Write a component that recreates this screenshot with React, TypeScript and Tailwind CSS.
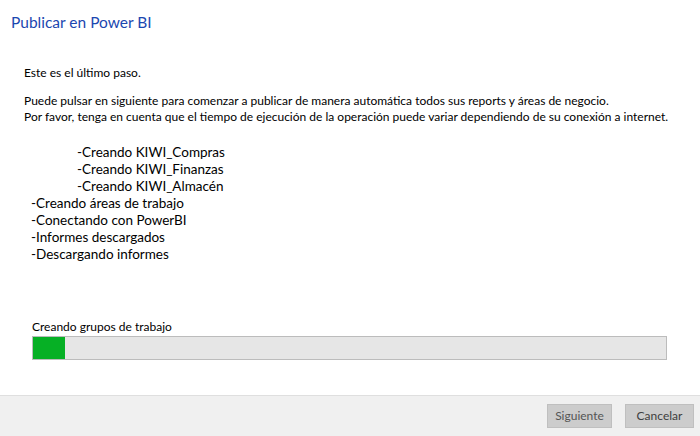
export default function App() {
  const subSteps = ['-Creando KIWI_Compras', '-Creando KIWI_Finanzas', '-Creando KIWI_Almacén'];
  const steps = [
    '-Creando áreas de trabajo',
    '-Conectando con PowerBI',
    '-Informes descargados',
    '-Descargando informes',
  ];
  const progress = 5;

  return (
    <div className="w-[700px] h-[436px] bg-white flex flex-col font-['Lato',sans-serif] text-[12px] text-black overflow-hidden">
      <div className="flex-1 flex flex-col">
        <h1 className="pl-[11px] pt-[10px] text-[15.5px] leading-[24px] text-[#1b47b0]">Publicar en Power BI</h1>

        <p className="pl-[24px] mt-[31px] leading-[16px]">Este es el último paso.</p>

        <div className="pl-[24px] mt-[12px] leading-[16px] whitespace-nowrap">
          <p>
            Puede pulsar en siguiente para comenzar a publicar de manera automática todos sus reports y áreas de negocio.
          </p>
          <p>
            Por favor, tenga en cuenta que el tiempo de ejecución de la operación puede variar dependiendo de su conexión a internet.
          </p>
        </div>

        <ul className="mt-[19px] text-[13.5px] leading-[17px]">
          {subSteps.map((s) => (
            <li key={s} className="pl-[77px]">
              {s}
            </li>
          ))}
          {steps.map((s) => (
            <li key={s} className="pl-[31px]">
              {s}
            </li>
          ))}
        </ul>

        <div className="mt-auto mb-[35px] px-[32px]">
          <div className="leading-[16px] mb-[1px]">Creando grupos de trabajo</div>
          <div className="w-[635px] h-[24px] border border-[#bcbcbc] bg-[#e6e6e6]">
            <div className="h-full bg-[#06b025]" style={{ width: `${progress}%` }} />
          </div>
        </div>
      </div>

      <div className="h-[41px] bg-[#f0f0f0] border-t border-[#dfdfdf] flex items-center justify-end gap-[13px] pr-[6px]">
        <button className="w-[65px] h-[24px] bg-[#cccccc] border border-[#bfbfbf] text-[#555555] text-[12px] leading-none">
          Siguiente
        </button>
        <button className="w-[69px] h-[24px] bg-[#cccccc] border border-[#bfbfbf] text-[#404040] text-[12px] leading-none">
          Cancelar
        </button>
      </div>
    </div>
  );
}
